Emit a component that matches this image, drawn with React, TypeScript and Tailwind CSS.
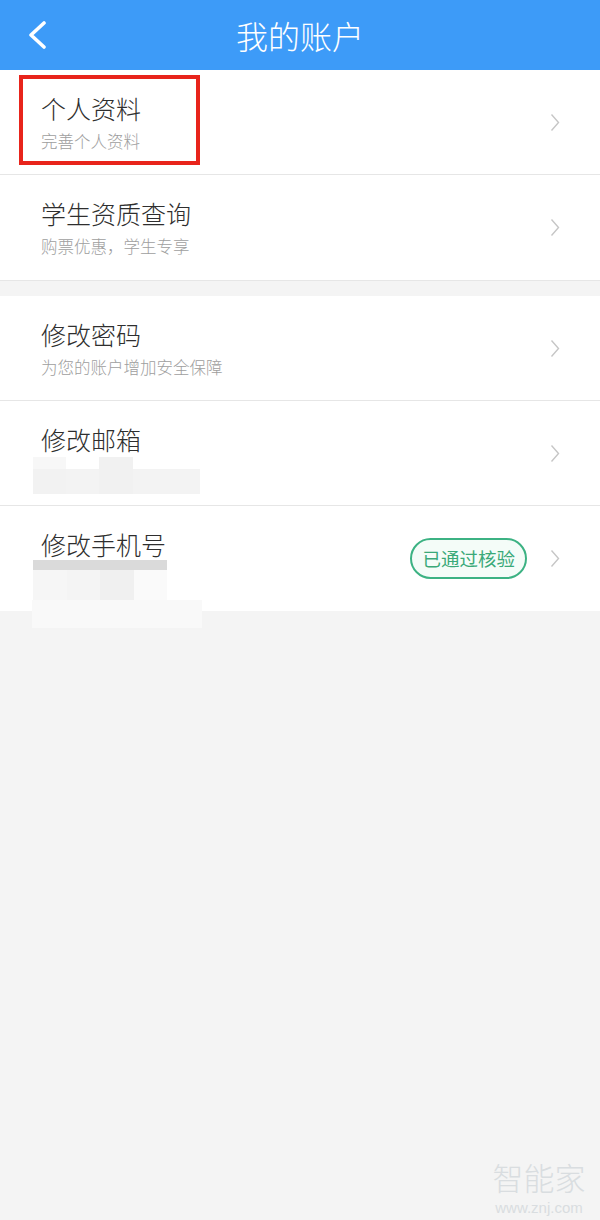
import { ReactNode } from "react";

const font = { fontFamily: '"Noto Sans CJK SC", "Noto Sans", sans-serif' };

function Chevron() {
  return (
    <svg width="10" height="19" viewBox="0 0 10 19" fill="none" className="shrink-0">
      <polyline points="1.5,1.5 8.5,9.5 1.5,17.5" stroke="#c6c6c6" strokeWidth="1.4" />
    </svg>
  );
}

function Row({
  title,
  children,
  right,
  last,
  extra,
}: {
  title: string;
  children?: ReactNode;
  right?: ReactNode;
  last?: boolean;
  extra?: ReactNode;
}) {
  return (
    <div
      className={
        "relative flex items-center h-[105px] pl-[41px] pr-[40px] bg-white " +
        (last ? "" : "border-b border-[#e6e6e6]")
      }
    >
      <div className="flex-1 self-start pt-[22px]">
        <div className="text-[25px] leading-[32px] font-light text-[#2e2e2e]">{title}</div>
        {children}
      </div>
      {right}
      <Chevron />
      {extra}
    </div>
  );
}

function Sub({ text }: { text: string }) {
  return <div className="mt-[6px] text-[16.5px] leading-[22px] font-light text-[#9e9e9e]">{text}</div>;
}

export default function App() {
  return (
    <div className="w-[600px] h-[1220px] bg-[#f4f4f4] relative overflow-hidden" style={font}>
      {/* header */}
      <header className="h-[70px] bg-[#3d9bf8] flex items-center justify-center relative">
        <button className="absolute left-[26px] top-[21px]" aria-label="back">
          <svg width="22" height="28" viewBox="0 0 22 28" fill="none">
            <polyline
              points="18,2 5,14 18,26"
              stroke="white"
              strokeWidth="3.6"
              strokeLinecap="round"
              strokeLinejoin="round"
            />
          </svg>
        </button>
        <h1 className="text-[32px] leading-none text-white font-light">我的账户</h1>
      </header>

      <div className="bg-white">
        <Row
          title="个人资料"
          extra={
            <div className="absolute left-[19px] top-[5px] w-[181px] h-[90px] border-[4px] border-[#e8241b]" />
          }
        >
          <Sub text="完善个人资料" />
        </Row>
        <Row title="学生资质查询" last>
          <Sub text="购票优惠，学生专享" />
        </Row>
      </div>

      <div className="h-[16px] border-t border-[#e6e6e6]" />

      <div className="bg-white">
        <Row title="修改密码">
          <Sub text="为您的账户增加安全保障" />
        </Row>
        <Row title="修改邮箱">
          <div className="ml-[-8px] mt-[2px] w-[167px] h-[37px] flex">
            <div className="w-[33px] flex flex-col">
              <div className="h-[12px] bg-[#f7f7f7]" />
              <div className="flex-1 bg-[#f2f2f2]" />
            </div>
            <div className="w-[33px] flex flex-col">
              <div className="h-[12px] bg-white" />
              <div className="flex-1 bg-[#f3f3f3]" />
            </div>
            <div className="w-[34px] bg-[#f1f1f1]" />
            <div className="flex-1 flex flex-col">
              <div className="h-[12px] bg-white" />
              <div className="flex-1 bg-[#f3f3f3]" />
            </div>
          </div>
        </Row>
        <Row
          title="修改手机号"
          last
          right={
            <div className="mr-[23px] h-[41px] px-[10px] rounded-full border-2 border-[#3cb283] bg-[#f4fcf8] flex items-center text-[18.5px] text-[#3aa979]">
              已通过核验
            </div>
          }
          extra={
            <div className="absolute left-[32px] top-[94px] w-[170px] h-[28px] bg-[#f9f9f9]" />
          }
        >
          <div className="ml-[-8px] w-[134px]">
            <div className="h-[10px] bg-[#dadada]" />
            <div className="h-[33px] flex">
              <div className="w-[34px] bg-[#f6f6f6]" />
              <div className="w-[33px] bg-[#f4f4f4]" />
              <div className="w-[34px] bg-[#f0f0f0]" />
              <div className="flex-1 bg-[#fafafa]" />
            </div>
          </div>
        </Row>
      </div>

      {/* watermark */}
      <div className="absolute right-[11px] top-[1154px] w-[100px] flex flex-col items-center text-[#d9dde0]">
        <span className="text-[31px] leading-[45px] font-light">智能家</span>
        <span
          className="text-[15px] leading-[17px]"
          style={{ fontFamily: '"Liberation Sans", sans-serif' }}
        >
          www.znj.com
        </span>
      </div>
    </div>
  );
}
